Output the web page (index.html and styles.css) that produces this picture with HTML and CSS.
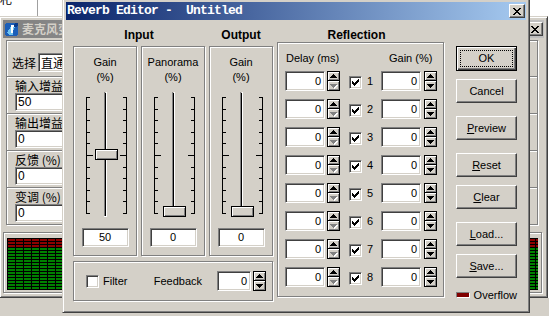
FILE: index.html
```html
<!DOCTYPE html>
<html lang="en">
<head>
    <meta charset="UTF-8">
    <title>Reverb Editor - Untitled</title>
    <link rel="stylesheet" href="styles.css">
</head>
<body>
    <!-- shared pixel glyphs -->
    <svg class="defs" width="0" height="0">
        <symbol id="x-glyph" viewBox="0 0 8 7">
            <path d="M0 0h2v1H0z M6 0h2v1H6z M1 1h2v1H1z M5 1h2v1H5z M2 2h4v1H2z M3 3h2v1H3z M2 4h4v1H2z M1 5h2v1H1z M5 5h2v1H5z M0 6h2v1H0z M6 6h2v1H6z" fill="#000"/>
        </symbol>
        <symbol id="tick" viewBox="0 0 7 7">
            <path d="M6 0h1v1H6z M5 1h2v1H5z M0 2h1v1H0z M4 2h3v1H4z M0 3h2v1H0z M3 3h3v1H3z M0 4h5v1H0z M1 5h3v1H1z M2 6h1v1H2z" fill="#000"/>
        </symbol>
        <symbol id="spin" viewBox="0 0 13 20">
            <rect width="13" height="20" fill="#000"/>
            <rect x="1" y="1" width="11" height="8" fill="#fff"/>
            <rect x="2" y="2" width="10" height="7" fill="#808080"/>
            <rect x="2" y="2" width="9" height="6" fill="#d4d0c8"/>
            <rect x="1" y="10" width="11" height="9" fill="#fff"/>
            <rect x="2" y="11" width="10" height="8" fill="#808080"/>
            <rect x="2" y="11" width="9" height="7" fill="#d4d0c8"/>
            <path d="M6 3h1v1h1v1h1v1h1v1H3V6h1V5h1V4h1z" fill="#000"/>
            <path d="M3 13H10V14H9V15H8V16H7V17H6V16H5V15H4V14H3z" fill="#000"/>
        </symbol>
        <symbol id="spin-low" viewBox="0 0 13 20">
            <rect width="13" height="20" fill="#000"/>
            <rect x="1" y="1" width="11" height="8" fill="#fff"/>
            <rect x="2" y="2" width="10" height="7" fill="#808080"/>
            <rect x="2" y="2" width="9" height="6" fill="#d4d0c8"/>
            <rect x="1" y="10" width="11" height="9" fill="#fff"/>
            <rect x="2" y="11" width="10" height="8" fill="#808080"/>
            <rect x="2" y="11" width="9" height="7" fill="#d4d0c8"/>
            <path d="M6 3h1v1h1v1h1v1h1v1H3V6h1V5h1V4h1z" fill="#000"/>
            <path d="M4 14H11V15H10V16H9V17H8V18H7V17H6V16H5V15H4z" fill="#fff"/>
            <path d="M3 13H10V14H9V15H8V16H7V17H6V16H5V15H4V14H3z" fill="#808080"/>
        </symbol>
        <symbol id="track" viewBox="0 0 62 126">
            <rect x="30" y="0" width="1" height="124" fill="#808080"/>
            <rect x="31" y="1" width="1" height="123" fill="#000"/>
            <rect x="32" y="0" width="1" height="125" fill="#fff"/>
            <rect x="30" y="124" width="3" height="1" fill="#fff"/>
            <path d="M12 5h1v117h-1z M52 5h1v117h-1z" fill="#000"/>
            <path d="M13 5h3v1h-3z M13 17h3v1h-3z M13 28h3v1h-3z M13 40h3v1h-3z M13 51h3v1h-3z M13 63h6v1h-6z M13 75h3v1h-3z M13 86h3v1h-3z M13 98h3v1h-3z M13 109h3v1h-3z M13 121h3v1h-3z" fill="#000"/>
            <path d="M49 5h3v1h-3z M49 17h3v1h-3z M49 28h3v1h-3z M49 40h3v1h-3z M49 51h3v1h-3z M46 63h6v1h-6z M49 75h3v1h-3z M49 86h3v1h-3z M49 98h3v1h-3z M49 109h3v1h-3z M49 121h3v1h-3z" fill="#000"/>
        </symbol>
    </svg>

    <!-- what lies behind the dialog -->
    <div class="desk-top">
        <div class="desk-cell"><span class="cut">札</span></div>
    </div>
    <div class="desk-bottom"></div>

    <div class="win mic-win">
        <div class="caption inactive">
            <span class="mic-title">
                <svg class="app-icon" width="16" height="16" viewBox="0 0 16 16">
                    <rect x="1" y="2" width="13" height="13" rx="3" fill="#1c5fb8"/>
                    <path d="M3 12c2-5 5-8 10-9-3 3-4 6-4 11H5z" fill="#6fc3f0"/>
                    <path d="M7 4h3v2H9v6H7z" fill="#fff"/>
                    <circle cx="12" cy="4" r="2" fill="#0a3c8c"/>
                </svg>麦克风变声器
            </span>
            <span class="cap-btn"><svg width="8" height="7"><use href="#x-glyph"/></svg></span>
        </div>
        <div class="mic-body">
            <div class="mic-panel">
                <div class="pick-row"><span class="cn">选择</span><span class="combo cn">直通</span></div>
                <div class="mic-field"><span class="cn">输入增益</span><span class="field cn-field">50</span></div>
                <div class="mic-field"><span class="cn">输出增益</span><span class="field cn-field">0</span></div>
                <div class="mic-field"><span class="cn">反馈 (%)</span><span class="field cn-field">0</span></div>
                <div class="mic-field"><span class="cn">变调 (%)</span><span class="field cn-field">0</span></div>
            </div>
            <div class="meter-panel">
                <div class="meter">
                    <div class="meter-red"></div>
                    <div class="meter-green"></div>
                </div>
            </div>
        </div>
    </div>

    <!-- reverb editor dialog -->
    <div class="win dialog">
        <div class="caption">
            <span class="caption-text">Reverb Editor -  Untitled</span>
            <span class="cap-btn"><svg width="8" height="7"><use href="#x-glyph"/></svg></span>
        </div>

        <div class="client">
            <div class="left-col">
                <div class="heads">
                    <div class="head">Input</div>
                    <div class="head">Output</div>
                </div>

                <div class="sliders">
                    <div class="group slider-group">
                        <div class="glabel">Gain<br>(%)</div>
                        <div class="slider">
                            <svg width="62" height="126"><use href="#track"/></svg>
                            <div class="thumb" style="top: 57px"></div>
                        </div>
                        <div class="field centered">50</div>
                    </div>
                    <div class="group slider-group">
                        <div class="glabel">Panorama<br>(%)</div>
                        <div class="slider">
                            <svg width="62" height="126"><use href="#track"/></svg>
                            <div class="thumb" style="top: 114px"></div>
                        </div>
                        <div class="field centered">0</div>
                    </div>
                    <div class="group slider-group">
                        <div class="glabel">Gain<br>(%)</div>
                        <div class="slider">
                            <svg width="62" height="126"><use href="#track"/></svg>
                            <div class="thumb" style="top: 114px"></div>
                        </div>
                        <div class="field centered">0</div>
                    </div>
                </div>

                <div class="group filter-group">
                    <span class="check"></span>
                    <span class="filter-label">Filter</span>
                    <span class="fb-label">Feedback</span>
                    <div class="field num fb-field">0</div>
                    <svg class="spin" width="13" height="20"><use href="#spin"/></svg>
                </div>
            </div>

            <div class="refl-col">
                <div class="head refl-title">Reflection</div>
                <div class="group refl-group">
                    <div class="refl-head">
                        <span class="rh-delay">Delay (ms)</span>
                        <span>Gain (%)</span>
                    </div>
                    <div class="refl-rows">
                        <div class="refl-row">
                            <div class="field num">0</div>
                            <svg class="spin" width="13" height="20"><use href="#spin-low"/></svg>
                            <span class="check"><svg width="7" height="7"><use href="#tick"/></svg></span>
                            <span class="idx">1</span>
                            <div class="field num">0</div>
                            <svg class="spin gain-spin" width="13" height="20"><use href="#spin"/></svg>
                        </div>
                        <div class="refl-row">
                            <div class="field num">0</div>
                            <svg class="spin" width="13" height="20"><use href="#spin-low"/></svg>
                            <span class="check"><svg width="7" height="7"><use href="#tick"/></svg></span>
                            <span class="idx">2</span>
                            <div class="field num">0</div>
                            <svg class="spin gain-spin" width="13" height="20"><use href="#spin"/></svg>
                        </div>
                        <div class="refl-row">
                            <div class="field num">0</div>
                            <svg class="spin" width="13" height="20"><use href="#spin-low"/></svg>
                            <span class="check"><svg width="7" height="7"><use href="#tick"/></svg></span>
                            <span class="idx">3</span>
                            <div class="field num">0</div>
                            <svg class="spin gain-spin" width="13" height="20"><use href="#spin"/></svg>
                        </div>
                        <div class="refl-row">
                            <div class="field num">0</div>
                            <svg class="spin" width="13" height="20"><use href="#spin-low"/></svg>
                            <span class="check"><svg width="7" height="7"><use href="#tick"/></svg></span>
                            <span class="idx">4</span>
                            <div class="field num">0</div>
                            <svg class="spin gain-spin" width="13" height="20"><use href="#spin"/></svg>
                        </div>
                        <div class="refl-row">
                            <div class="field num">0</div>
                            <svg class="spin" width="13" height="20"><use href="#spin-low"/></svg>
                            <span class="check"><svg width="7" height="7"><use href="#tick"/></svg></span>
                            <span class="idx">5</span>
                            <div class="field num">0</div>
                            <svg class="spin gain-spin" width="13" height="20"><use href="#spin"/></svg>
                        </div>
                        <div class="refl-row">
                            <div class="field num">0</div>
                            <svg class="spin" width="13" height="20"><use href="#spin-low"/></svg>
                            <span class="check"><svg width="7" height="7"><use href="#tick"/></svg></span>
                            <span class="idx">6</span>
                            <div class="field num">0</div>
                            <svg class="spin gain-spin" width="13" height="20"><use href="#spin"/></svg>
                        </div>
                        <div class="refl-row">
                            <div class="field num">0</div>
                            <svg class="spin" width="13" height="20"><use href="#spin-low"/></svg>
                            <span class="check"><svg width="7" height="7"><use href="#tick"/></svg></span>
                            <span class="idx">7</span>
                            <div class="field num">0</div>
                            <svg class="spin gain-spin" width="13" height="20"><use href="#spin"/></svg>
                        </div>
                        <div class="refl-row">
                            <div class="field num">0</div>
                            <svg class="spin" width="13" height="20"><use href="#spin-low"/></svg>
                            <span class="check"><svg width="7" height="7"><use href="#tick"/></svg></span>
                            <span class="idx">8</span>
                            <div class="field num">0</div>
                            <svg class="spin gain-spin" width="13" height="20"><use href="#spin"/></svg>
                        </div>
                    </div>
                </div>
            </div>

            <div class="btn-col">
                <div class="btn-group">
                    <div class="btn default">OK</div>
                    <div class="btn">Cancel</div>
                </div>
                <div class="btn-group">
                    <div class="btn"><u>P</u>review</div>
                </div>
                <div class="btn-group">
                    <div class="btn"><u>R</u>eset</div>
                    <div class="btn"><u>C</u>lear</div>
                </div>
                <div class="btn-group">
                    <div class="btn"><u>L</u>oad...</div>
                    <div class="btn"><u>S</u>ave...</div>
                </div>
                <div class="overflow">
                    <span class="led"></span>
                    <span>Overflow</span>
                </div>
            </div>
        </div>
    </div>
</body>
</html>
```

FILE: styles.css
```css
body {
    margin: 0;
    width: 549px;
    height: 316px;
    position: relative;
    overflow: hidden;
    background: #fff;
    font-family: 'Liberation Sans', 'Noto Sans CJK SC', Arial, sans-serif;
    font-size: 11px;
    color: #000;
}

.defs {
    position: absolute;
    width: 0;
    height: 0;
}

svg {
    display: block;
    shape-rendering: crispEdges;
}

/* desktop behind the windows */
.desk-top {
    height: 18px;
    display: flex;
}

.desk-cell {
    width: 37px;
    border-right: 1px solid #a0a0a0;
    overflow: hidden;
}

.cut {
    display: block;
    margin-top: -8px;
    font-family: 'Noto Sans CJK SC', sans-serif;
    font-size: 12px;
    line-height: 14px;
}

.desk-bottom {
    position: absolute;
    left: 0;
    top: 298px;
    width: 549px;
    height: 18px;
    background: #d4d0c8;
}

/* classic window frame */
.win {
    position: absolute;
    box-sizing: border-box;
    padding: 3px;
    background: #d4d0c8;
    border: 1px solid;
    border-color: #d4d0c8 #404040 #404040 #d4d0c8;
    box-shadow: inset 1px 1px #fff, inset -1px -1px #808080;
    display: flex;
    flex-direction: column;
}

.caption {
    flex: none;
    height: 18px;
    display: flex;
    align-items: center;
    justify-content: space-between;
    padding: 0 1px 0 1px;
    background: linear-gradient(90deg, #0a246a, #a6caf0);
    color: #fff;
}

.caption.inactive {
    background: linear-gradient(90deg, #808080, #c0c0c0);
    color: #d4d0c8;
}

.caption-text {
    font-family: 'Liberation Mono', 'Courier New', monospace;
    font-weight: bold;
    font-size: 13px;
    letter-spacing: -0.8px;
    white-space: pre;
    line-height: 18px;
}

.cap-btn {
    width: 16px;
    height: 14px;
    box-sizing: border-box;
    background: #d4d0c8;
    border: 1px solid;
    border-color: #fff #404040 #404040 #fff;
    box-shadow: inset -1px -1px #808080;
    display: flex;
    justify-content: center;
    padding-top: 3px;
}

/* mic changer window (background) */
.mic-win {
    left: -1px;
    top: 16px;
    width: 549px;
    height: 282px;
}

.mic-title {
    display: flex;
    align-items: center;
    gap: 2px;
    font-family: 'Noto Sans CJK SC', sans-serif;
    font-weight: bold;
    font-size: 12px;
    line-height: 18px;
    white-space: nowrap;
}

.mic-body {
    flex: 1;
    padding: 2px 2px 0 0;
    display: flex;
    flex-direction: column;
}

.mic-panel {
    width: 532px;
    height: 185px;
    box-sizing: border-box;
    margin-left: 3px;
    border: 1px solid #808080;
    box-shadow: inset 1px 1px #fff, 1px 1px #fff;
}

.cn {
    font-family: 'Noto Sans CJK SC', sans-serif;
    font-size: 12px;
    line-height: 14px;
}

.pick-row {
    margin-top: 12px;
    height: 19px;
    display: flex;
    align-items: center;
    padding-left: 5px;
}

.combo {
    margin-left: 2px;
    width: 120px;
    height: 19px;
    box-sizing: border-box;
    padding-left: 2px;
    line-height: 17px;
    background: #fff;
    border: 1px solid;
    border-color: #808080 #fff #fff #808080;
    box-shadow: inset 1px 1px #404040, inset -1px -1px #d4d0c8;
}

.mic-field {
    height: 37px;
    box-sizing: border-box;
    border-top: 1px solid #808080;
    box-shadow: inset 0 1px #fff;
    padding: 2px 0 0 8px;
    display: flex;
    flex-direction: column;
    align-items: flex-start;
}

.pick-row + .mic-field {
    margin-top: 4px;
}

.cn-field {
    width: 120px;
    height: 18px;
    padding-left: 2px;
    line-height: 16px;
    font-size: 12px;
}

.meter-panel {
    margin-top: 7px;
    height: 61px;
    box-sizing: border-box;
    border: 1px solid #808080;
    box-shadow: inset 1px 1px #fff, 1px 1px #fff;
    padding: 5px 3px 0 3px;
}

.meter {
    height: 52px;
    background: #000;
    display: flex;
    flex-direction: column;
}

.meter-red {
    height: 9px;
    background:
        repeating-linear-gradient(90deg, #000 0 1px, transparent 1px 8px),
        repeating-linear-gradient(#000 0 1px, #8c0000 1px 3px);
}

.meter-green {
    flex: 1;
    background:
        repeating-linear-gradient(90deg, #000 0 1px, transparent 1px 8px),
        repeating-linear-gradient(#000 0 1px, #008000 1px 3px);
}

/* reverb editor dialog */
.dialog {
    left: 62px;
    top: -2px;
    width: 468px;
    height: 315px;
}

.client {
    flex: 1;
    display: flex;
    padding-left: 7px;
}

.left-col {
    width: 200px;
}

.heads {
    display: grid;
    grid-template-columns: 132px 64px;
    column-gap: 4px;
    height: 26px;
}

.head {
    padding-top: 8px;
    font-weight: bold;
    font-size: 12px;
    line-height: 14px;
    text-align: center;
}

.group {
    box-sizing: border-box;
    border: 1px solid #808080;
    box-shadow: inset 1px 1px #fff, 1px 1px #fff;
}

.sliders {
    display: grid;
    grid-template-columns: repeat(3, 64px);
    column-gap: 4px;
}

.slider-group {
    height: 210px;
}

.glabel {
    padding-top: 8px;
    line-height: 15px;
    text-align: center;
}

.slider {
    position: relative;
    margin-top: 7px;
    height: 126px;
}

.thumb {
    position: absolute;
    left: 21px;
    width: 23px;
    height: 11px;
    box-sizing: border-box;
    background: #d4d0c8;
    border: 1px solid #000;
    box-shadow: inset 1px 1px #fff, inset -1px -1px #808080;
}

/* sunken edit field */
.field {
    box-sizing: border-box;
    background: #fff;
    border: 1px solid;
    border-color: #808080 #fff #fff #808080;
    box-shadow: inset 1px 1px #404040, inset -1px -1px #d4d0c8;
}

.field.centered {
    width: 47px;
    height: 19px;
    margin: 10px auto 0;
    text-align: center;
    line-height: 17px;
}

.field.num {
    width: 40px;
    height: 20px;
    text-align: right;
    padding-right: 3px;
    line-height: 18px;
}

.check {
    width: 13px;
    height: 13px;
    box-sizing: border-box;
    flex: none;
    background: #fff;
    border: 1px solid;
    border-color: #808080 #fff #fff #808080;
    box-shadow: inset 1px 1px #404040, inset -1px -1px #d4d0c8;
    padding: 2px 0 0 2px;
}

.filter-group {
    margin-top: 5px;
    height: 40px;
    display: flex;
    align-items: center;
    padding: 0 6px 0 12px;
}

.filter-label {
    margin-left: 4px;
}

.fb-label {
    margin-left: auto;
    margin-right: 15px;
}

.fb-field.num {
    width: 34px;
}

.spin {
    margin-left: 2px;
    flex: none;
}

.refl-col {
    margin-left: 4px;
    width: 167px;
}

.refl-title {
    padding-right: 8px;
}

.refl-group {
    height: 255px;
}

.refl-head {
    display: flex;
    padding: 8px 0 0 8px;
    line-height: 15px;
}

.rh-delay {
    width: 103px;
}

.refl-rows {
    margin-top: 5px;
    padding-left: 7px;
    display: flex;
    flex-direction: column;
    gap: 8px;
}

.refl-row {
    display: flex;
    align-items: flex-start;
    height: 20px;
}

.refl-row .check {
    margin: 5px 0 0 9px;
}

.idx {
    width: 14px;
    margin-left: 5px;
    line-height: 21px;
}

.spin.gain-spin {
    margin-left: 3px;
}

/* command buttons */
.btn-col {
    margin-left: 12px;
    width: 61px;
    padding-top: 26px;
    display: flex;
    flex-direction: column;
    gap: 13px;
}

.btn-group {
    display: flex;
    flex-direction: column;
    gap: 8px;
}

.btn {
    position: relative;
    height: 24px;
    box-sizing: border-box;
    background: #d4d0c8;
    border: 1px solid;
    border-color: #fff #404040 #404040 #fff;
    box-shadow: inset -1px -1px #808080;
    text-align: center;
    line-height: 22px;
}

.btn.default {
    height: 25px;
    border-color: #000;
    box-shadow: inset 1px 1px #fff, inset -1px -1px #404040, inset -2px -2px #808080;
}

.btn.default::after {
    content: "";
    position: absolute;
    left: 3px;
    top: 3px;
    right: 3px;
    bottom: 3px;
    border: 1px dotted #000;
}

.overflow {
    height: 7px;
    display: flex;
    align-items: center;
    gap: 4px;
    white-space: nowrap;
}

.led {
    width: 14px;
    height: 6px;
    box-sizing: border-box;
    background: #800000;
    border: 1px solid;
    border-color: #808080 #fff #fff #808080;
}
```
